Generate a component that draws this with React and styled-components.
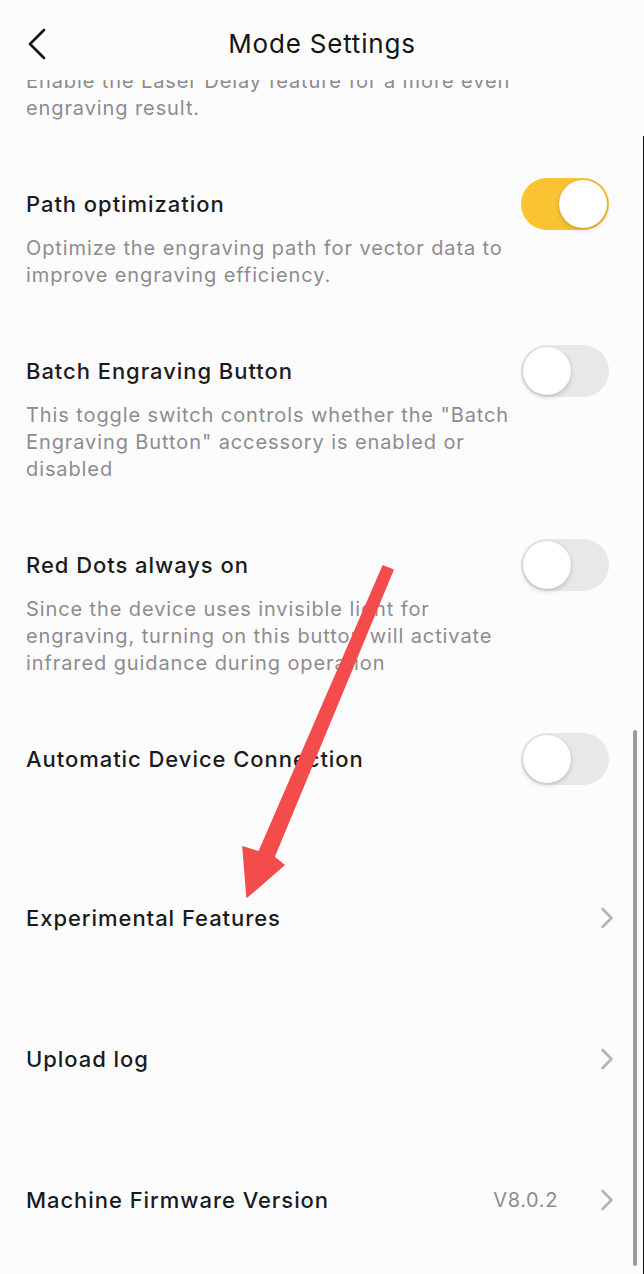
import React, { useState } from 'react';
import styled, { createGlobalStyle } from 'styled-components';

const GlobalStyle = createGlobalStyle`
  * { box-sizing: border-box; }
  body {
    margin: 0;
    background-color: #fdfcfd;
    font-family: Inter, "Noto Sans", "Liberation Sans", sans-serif;
  }
`;

const Screen = styled.div`
  position: relative;
  width: 644px;
  height: 1274px;
  overflow: hidden;
  background-color: #fdfcfd;
`;

const Header = styled.header`
  position: relative;
  z-index: 2;
  display: grid;
  grid-template-columns: 90px 1fr 90px;
  align-items: start;
  height: 80px;
  padding-top: 26px;
  background-color: #fdfcfd;
`;

const BackButton = styled.button`
  display: flex;
  align-items: center;
  justify-content: flex-start;
  height: 36px;
  padding: 0 0 0 27px;
  border: none;
  background: none;
  cursor: pointer;
`;

const HeaderTitle = styled.h1`
  margin: 0;
  text-align: center;
  font-size: 26px;
  font-weight: 400;
  line-height: 36px;
  letter-spacing: 0.8px;
  color: #141414;
`;

const Body = styled.main`
  display: flex;
  flex-direction: column;
`;

const Section = styled.section`
  padding: 0 35px 0 26px;
  margin-top: ${(p) => (p.$flush ? '-12px' : '0')};
  margin-bottom: ${(p) => (p.$last ? '73px' : '67px')};
`;

const ItemHead = styled.div`
  display: flex;
  align-items: center;
  justify-content: space-between;
  height: 30px;
`;

const ItemTitle = styled.h3`
  margin: 0;
  font-size: 22px;
  font-weight: 550;
  line-height: 30px;
  letter-spacing: 0.95px;
  color: #1b1b1d;
`;

const Desc = styled.p`
  margin: ${(p) => (p.$noHead ? '0' : '16px 0 0')};
  max-width: 500px;
  font-size: 20px;
  line-height: 27px;
  letter-spacing: 0.9px;
  color: #8c8c90;
`;

const Track = styled.button`
  position: relative;
  flex-shrink: 0;
  width: 88px;
  height: 52px;
  padding: 0;
  border: none;
  border-radius: 26px;
  background-color: ${(p) => (p.$on ? '#f9c332' : '#e8e8ea')};
  cursor: pointer;
`;

const Knob = styled.span`
  position: absolute;
  top: 2px;
  left: ${(p) => (p.$on ? '38px' : '2px')};
  width: 48px;
  height: 48px;
  border-radius: 50%;
  background-color: #ffffff;
  box-shadow: 0 2px 5px rgba(0, 0, 0, 0.18), 0 0 1px rgba(0, 0, 0, 0.12);
`;

const LinkList = styled.div`
  display: flex;
  flex-direction: column;
`;

const LinkRow = styled.div`
  display: flex;
  align-items: center;
  height: 141px;
  padding: 0 30px 0 26px;
`;

const LinkLabel = styled.span`
  flex: 1;
  font-size: 22px;
  font-weight: 550;
  letter-spacing: 0.95px;
  color: #1b1b1d;
`;

const Value = styled.span`
  margin-right: 42px;
  font-size: 20px;
  letter-spacing: 0.6px;
  color: #8c8c90;
`;

const ScrollThumb = styled.div`
  position: absolute;
  left: 633px;
  top: 730px;
  width: 4px;
  height: 536px;
  border-radius: 2px;
  background-color: #9c9ca0;
`;

const EdgeLine = styled.div`
  position: absolute;
  right: 0;
  top: 136px;
  bottom: 0;
  width: 1px;
  background-color: #111;
`;

const Annotation = styled.svg`
  position: absolute;
  top: 0;
  left: 0;
  pointer-events: none;
  z-index: 3;
`;

const Chevron = () => (
  <svg width="14" height="22" viewBox="0 0 14 22">
    <polyline points="2.5,2 11.5,11 2.5,20" fill="none" stroke="#b3b3b6" strokeWidth="2.6" strokeLinecap="round" strokeLinejoin="round" />
  </svg>
);

const Toggle = ({ initial }) => {
  const [on, setOn] = useState(initial);
  return (
    <Track $on={on} onClick={() => setOn(!on)}>
      <Knob $on={on} />
    </Track>
  );
};

const toggles = [
  {
    title: 'Path optimization',
    on: true,
    desc: 'Optimize the engraving path for vector data to improve engraving efficiency.',
  },
  {
    title: 'Batch Engraving Button',
    on: false,
    desc: 'This toggle switch controls whether the "Batch Engraving Button" accessory is enabled or disabled',
  },
  {
    title: 'Red Dots always on',
    on: false,
    desc: 'Since the device uses invisible light for engraving, turning on this button will activate infrared guidance during operation',
  },
  { title: 'Automatic Device Connection', on: false },
];

const App = () => {
  return (
    <Screen>
      <GlobalStyle />
      <Header>
        <BackButton aria-label="Back">
          <svg width="20" height="32" viewBox="0 0 20 32">
            <polyline points="17,2 3,16 17,30" fill="none" stroke="#111" strokeWidth="2.6" strokeLinecap="round" strokeLinejoin="round" />
          </svg>
        </BackButton>
        <HeaderTitle>Mode Settings</HeaderTitle>
        <span />
      </Header>

      <Body>
        <Section $flush>
          <Desc $noHead>Enable the Laser Delay feature for a more even engraving result.</Desc>
        </Section>

        {toggles.map((t, i) => (
          <Section key={t.title} $last={i === toggles.length - 1}>
            <ItemHead>
              <ItemTitle>{t.title}</ItemTitle>
              <Toggle initial={t.on} />
            </ItemHead>
            {t.desc && <Desc>{t.desc}</Desc>}
          </Section>
        ))}

        <LinkList>
          <LinkRow>
            <LinkLabel>Experimental Features</LinkLabel>
            <Chevron />
          </LinkRow>
          <LinkRow>
            <LinkLabel>Upload log</LinkLabel>
            <Chevron />
          </LinkRow>
          <LinkRow>
            <LinkLabel>Machine Firmware Version</LinkLabel>
            <Value>V8.0.2</Value>
            <Chevron />
          </LinkRow>
        </LinkList>
      </Body>

      <ScrollThumb />
      <EdgeLine />

      <Annotation width="644" height="1274" viewBox="0 0 644 1274">
        <polygon
          points="383,566 393,570 274,857 284,865 247,897 243,847 259,852"
          fill="#f44b4b"
          strokeLinejoin="round"
          stroke="#f44b4b"
          strokeWidth="1.5"
        />
      </Annotation>
    </Screen>
  );
};

export default App;
